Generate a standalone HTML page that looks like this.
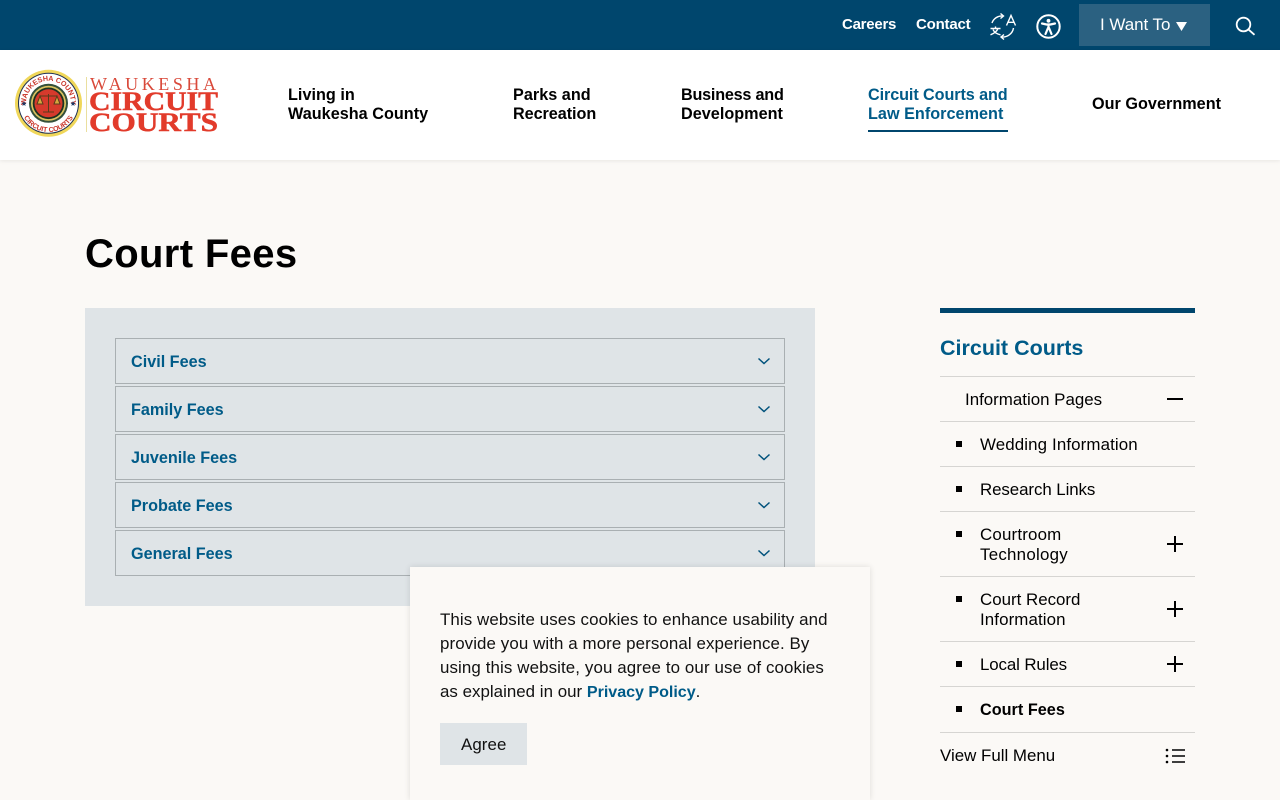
<!DOCTYPE html>
<html lang="en"><head><meta charset="utf-8"><title>Court Fees</title>
<style>
*{box-sizing:border-box}
html,body{margin:0;padding:0}
body{width:1280px;height:800px;overflow:hidden;position:relative;background:#fbf9f6;font-family:"Liberation Sans",sans-serif;color:#000}
.t{position:absolute;white-space:nowrap;line-height:20px;font-size:16.9px;letter-spacing:.07px}
.b{font-weight:bold;font-size:16.2px;letter-spacing:.03px}
.top{position:absolute;left:0;top:0;width:1280px;height:50px;background:#00466d}
.hdr{position:absolute;left:0;top:50px;width:1280px;height:110px;background:#fff;box-shadow:0 1px 4px rgba(0,0,0,.08)}
.w{color:#fff}
.acc{position:absolute;left:115px;width:670px;height:46px;border:1px solid #a9afb2;background:#dfe4e7}
.acc span{position:absolute;left:15px;top:13px;line-height:20px;font-size:16.2px;font-weight:bold;color:#005b88;white-space:nowrap}
.acc svg{position:absolute;left:641px;top:16px}
.ln{position:absolute;left:940px;width:255px;height:1px;background:#d6d5d2}
.sq{position:absolute;left:956px;width:6px;height:6px;background:#000}
svg{position:absolute;overflow:visible}
</style></head><body>
<div class="top"></div>
<span class="t b w" style="left:842px;top:15px;font-size:15px;letter-spacing:-.25px">Careers</span>
<span class="t b w" style="left:916px;top:15px;font-size:15px;letter-spacing:-.2px">Contact</span>
<svg style="left:990px;top:13px" width="26" height="26" viewBox="0 0 26 26" fill="none" stroke="#fff" stroke-width="1.4">
<path d="M2 10C3.500 5.500 8 2.500 13 3"/><path d="M10.500 .5 13.500 3 10.500 5.500"/><path d="M23.500 15C22.500 21 17 24.500 11.500 24"/><path d="M14 21.500 11 24 14 26.500"/>
<path d="M.5 15.500H10.500M5.500 13.500V15.500M8 15.500C7 18 4 20.500 .5 21.800M3 16.500C4 19 7 21 10.500 21.800"/>
<path d="M16.500 12.500 21 2.500 25.500 12.500M18 9.300H24"/></svg>
<svg style="left:1036px;top:14px" width="25" height="25" viewBox="0 0 25 25" fill="none" stroke="#fff"><circle cx="12.500" cy="12.500" r="11.200" stroke-width="2"/><circle cx="12.500" cy="6.800" r="1.900" fill="#fff" stroke="none"/><path d="M6 9.500 10.500 10.500H14.500L19 9.500M12.500 10.500V14.500M12 14 9.500 20M13 14 15.500 20" stroke-width="2.200" stroke-linecap="round"/></svg>
<div style="position:absolute;left:1079px;top:4px;width:131px;height:42px;background:#2b6181"></div>
<span class="t w" style="left:1100px;top:15px;letter-spacing:-.05px;font-size:17px">I Want To</span>
<svg style="left:1176px;top:21.500px" width="11" height="9"><path d="M0 0H11L5.500 9Z" fill="#fff"/></svg>
<svg style="left:1236px;top:17px" width="20" height="20" fill="none" stroke="#fff" stroke-width="1.800"><circle cx="7.500" cy="7.500" r="6.800"/><path d="M12.400 12.400 18.500 17.800"/></svg>

<div class="hdr"></div>
<svg style="left:14px;top:69px" width="70" height="70" viewBox="0 0 70 70">
<circle cx="34.500" cy="34.300" r="33.500" fill="#f0d75a"/><circle cx="34.500" cy="34.300" r="30.500" fill="#1d2f55"/><circle cx="34.500" cy="34.300" r="29.500" fill="#fff"/>
<circle cx="34.500" cy="34.300" r="19.500" fill="#34503a"/><circle cx="34.500" cy="34.300" r="17.500" fill="#d9c25f"/><circle cx="34.500" cy="34.300" r="15.800" fill="#1e3320"/><circle cx="34.500" cy="34.300" r="14" fill="#d63a2c"/>
<path d="M26 27H43M34.500 25V43M29 43H40M26 27 23 35H29ZM43 27 40 35H46Z" fill="#d6a63f" stroke="#5b3a1a" stroke-width="1"/>
<path id="ta" d="M13.500 42.400A22.500 22.500 0 1 1 55.500 42.400" fill="none"/>
<path id="tb" d="M6.500 35A28 28 0 0 0 62.500 35" fill="none"/>
<text font-family="Liberation Sans" font-size="7.200" font-weight="bold" fill="#c9352a" text-anchor="middle"><textPath href="#ta" startOffset="50%">WAUKESHA COUNTY</textPath></text>
<text font-family="Liberation Sans" font-size="7" font-weight="bold" fill="#c9352a" text-anchor="middle"><textPath href="#tb" startOffset="50%">CIRCUIT COURTS</textPath></text>
<path d="M10 32l.7 1.800 1.900.1-1.500 1.200.5 1.900-1.600-1.100-1.600 1.100.5-1.900-1.500-1.200 1.900-.1zM59 32l.7 1.800 1.900.1-1.500 1.200.5 1.900-1.600-1.100-1.600 1.100.5-1.900-1.500-1.200 1.900-.1z" fill="#1d3a66"/>
</svg>
<div style="position:absolute;left:86px;top:77px;width:1px;height:55px;background:#eadf9f"></div>
<svg style="left:88px;top:75px" width="132" height="60">
<text x="2" y="15" textLength="126" lengthAdjust="spacing" font-family="Liberation Serif" font-size="18" fill="#d9493a">WAUKESHA</text>
<text x="1" y="35" textLength="129" lengthAdjust="spacingAndGlyphs" font-family="Liberation Serif" font-weight="bold" font-size="26" fill="#e23b2b" stroke="#e23b2b" stroke-width=".5">CIRCUIT</text>
<text x="1" y="56" textLength="129" lengthAdjust="spacingAndGlyphs" font-family="Liberation Serif" font-weight="bold" font-size="26" fill="#e23b2b" stroke="#e23b2b" stroke-width=".5">COURTS</text>
</svg>

<span class="t b" style="left:288px;top:85px">Living in</span>
<span class="t b" style="left:288px;top:104px">Waukesha County</span>
<span class="t b" style="left:513px;top:85px">Parks and</span>
<span class="t b" style="left:513px;top:104px;letter-spacing:-.05px">Recreation</span>
<span class="t b" style="left:681px;top:85px;letter-spacing:-.22px">Business and</span>
<span class="t b" style="left:681px;top:104px">Development</span>
<span class="t b" style="left:868px;top:85px;color:#005b88;letter-spacing:-.09px">Circuit Courts and</span>
<span class="t b" style="left:868px;top:104px;color:#005b88">Law Enforcement</span>
<div style="position:absolute;left:868px;top:130px;width:140px;height:2px;background:#00466d"></div>
<span class="t b" style="left:1092px;top:94px">Our Government</span>

<span class="t b" style="left:85px;top:230px;font-size:40px;line-height:48px;letter-spacing:.35px">Court Fees</span>

<div style="position:absolute;left:85px;top:308px;width:730px;height:298px;background:#dfe4e7"></div>
<div class="acc" style="top:338px"><span>Civil Fees</span><svg width="14" height="14" fill="none" stroke="#00527c" stroke-width="1.500"><path d="M1.500 3.500 7 8.500 12.500 3.500"/></svg></div>
<div class="acc" style="top:386px"><span>Family Fees</span><svg width="14" height="14" fill="none" stroke="#00527c" stroke-width="1.500"><path d="M1.500 3.500 7 8.500 12.500 3.500"/></svg></div>
<div class="acc" style="top:434px"><span>Juvenile Fees</span><svg width="14" height="14" fill="none" stroke="#00527c" stroke-width="1.500"><path d="M1.500 3.500 7 8.500 12.500 3.500"/></svg></div>
<div class="acc" style="top:482px"><span>Probate Fees</span><svg width="14" height="14" fill="none" stroke="#00527c" stroke-width="1.500"><path d="M1.500 3.500 7 8.500 12.500 3.500"/></svg></div>
<div class="acc" style="top:530px"><span>General Fees</span><svg width="14" height="14" fill="none" stroke="#00527c" stroke-width="1.500"><path d="M1.500 3.500 7 8.500 12.500 3.500"/></svg></div>

<div style="position:absolute;left:940px;top:308px;width:255px;height:5px;background:#00466d"></div>
<span class="t b" style="left:940px;top:335px;font-size:21.5px;line-height:26px;color:#005b88;letter-spacing:0">Circuit Courts</span>
<div class="ln" style="top:376px"></div>
<span class="t" style="left:965px;top:390px;letter-spacing:0">Information Pages</span>
<div style="position:absolute;left:1167px;top:398px;width:16px;height:2px;background:#000"></div>
<div class="ln" style="top:421px"></div>
<div class="sq" style="top:441px"></div>
<span class="t" style="left:980px;top:435px;letter-spacing:.12px">Wedding Information</span>
<div class="ln" style="top:466px"></div>
<div class="sq" style="top:486px"></div>
<span class="t" style="left:980px;top:480px;letter-spacing:-.08px">Research Links</span>
<div class="ln" style="top:511px"></div>
<div class="sq" style="top:531px"></div>
<span class="t" style="left:980px;top:525px;letter-spacing:.18px">Courtroom</span>
<span class="t" style="left:980px;top:545px;letter-spacing:.25px">Technology</span>
<svg style="left:1167px;top:536px" width="16" height="16"><path d="M0 8H16M8 0V16" stroke="#000" stroke-width="2"/></svg>
<div class="ln" style="top:576px"></div>
<div class="sq" style="top:596px"></div>
<span class="t" style="left:980px;top:590px;letter-spacing:0">Court Record</span>
<span class="t" style="left:980px;top:610px;letter-spacing:.1px">Information</span>
<svg style="left:1167px;top:601px" width="16" height="16"><path d="M0 8H16M8 0V16" stroke="#000" stroke-width="2"/></svg>
<div class="ln" style="top:641px"></div>
<div class="sq" style="top:661px"></div>
<span class="t" style="left:980px;top:655px;letter-spacing:-.12px">Local Rules</span>
<svg style="left:1167px;top:656px" width="16" height="16"><path d="M0 8H16M8 0V16" stroke="#000" stroke-width="2"/></svg>
<div class="ln" style="top:686px"></div>
<div class="sq" style="top:706px"></div>
<span class="t b" style="left:980px;top:700px">Court Fees</span>
<div class="ln" style="top:732px"></div>
<span class="t" style="left:940px;top:746px;letter-spacing:0">View Full Menu</span>
<svg style="left:1165px;top:748px" width="20" height="16"><path d="M7 2H20M7 8H20M7 14H20" stroke="#000" stroke-width="1.500"/><circle cx="2" cy="2" r="1.300"/><circle cx="2" cy="8" r="1.300"/><circle cx="2" cy="14" r="1.300"/></svg>

<div style="position:absolute;left:410px;top:567px;width:460px;height:233px;background:#fbf9f6;box-shadow:0 0 6px rgba(0,0,0,.12)"></div>
<span class="t" style="left:440px;top:610px;letter-spacing:.09px;color:#111">This website uses cookies to enhance usability and</span>
<span class="t" style="left:440px;top:634px;letter-spacing:.09px;color:#111">provide you with a more personal experience. By</span>
<span class="t" style="left:440px;top:658px;letter-spacing:.11px;color:#111">using this website, you agree to our use of cookies</span>
<span class="t" style="left:440px;top:682px;letter-spacing:.02px;color:#111">as explained in our <b style="color:#005b88;font-size:16.1px;letter-spacing:-.03px">Privacy Policy</b>.</span>
<div style="position:absolute;left:440px;top:723px;width:87px;height:42px;background:#dfe4e7"></div>
<span class="t" style="left:461px;top:735px;color:#111">Agree</span>
</body></html>
